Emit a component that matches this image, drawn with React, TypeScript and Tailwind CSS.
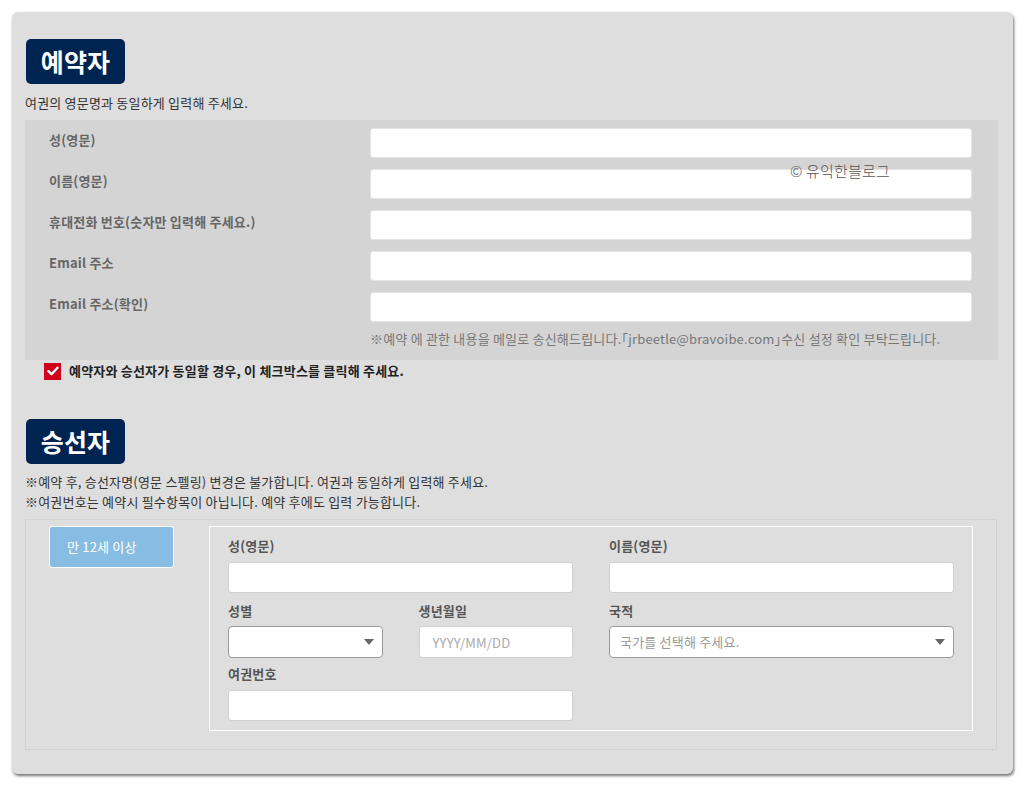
import React from 'react';

const font = "font-['Noto_Sans_CJK_KR','Noto_Sans',sans-serif]";

const inputCls = 'block w-full bg-white rounded-[3px] border border-[#d0d0d0] outline-none';

const Badge = ({ children }: { children: React.ReactNode }) => (
    <div className="ml-px flex h-[45px] w-[99px] items-center justify-center rounded-[5px] bg-[#002452] text-[25px] font-bold text-white">
        {children}
    </div>
);

const Arrow = () => (
    <svg width="10" height="6" viewBox="0 0 10 6" className="absolute right-[8px] top-1/2 -translate-y-1/2">
        <path d="M0 0h10L5 6z" fill="#666" />
    </svg>
);

const App = () => {
    const rows = ['성(영문)', '이름(영문)', '휴대전화 번호(숫자만 입력해 주세요.)', 'Email 주소', 'Email 주소(확인)'];

    return (
        <div className={`min-h-[788px] bg-white p-3 tracking-[0.2px] ${font}`}>
            <div className="relative h-[762px] w-[1001px] rounded-[6px] bg-[#dedede] px-[13px] pt-[27px] shadow-[1px_2px_3px_rgba(0,0,0,0.55)]">
                {/* 예약자 */}
                <Badge>예약자</Badge>
                <p className="mt-[10px] text-[13px] leading-[18px] text-[#333]">
                    여권의 영문명과 동일하게 입력해 주세요.
                </p>
                <div className="mt-2 w-[973px] bg-[#d4d4d4] pb-3 pl-6 pr-[26px] pt-2">
                    <div className="flex flex-col gap-[11px]">
                        {rows.map((label) => (
                            <div key={label} className="flex">
                                <label className="w-[321px] pt-[3px] text-[13px] font-bold leading-[18px] text-[#666]">
                                    {label}
                                </label>
                                <input type="text" className={`${inputCls} h-[30px] flex-1 border-[#e4e4e4]`} />
                            </div>
                        ))}
                    </div>
                    <p className="ml-[321px] mt-2 text-[13px] leading-[18px] text-[#777]">
                        ※예약 에 관한 내용을 메일로 송신해드립니다.｢jrbeetle@bravoibe.com｣수신 설정 확인 부탁드립니다.
                    </p>
                </div>
                <div className="ml-[19px] mt-[2px] flex items-center gap-2">
                    <span className="flex h-[17px] w-[17px] items-center justify-center bg-[#d0021b]">
                        <svg width="12" height="10" viewBox="0 0 12 10">
                            <path d="M1.5 5.2l3 3 6-6.4" fill="none" stroke="#fff" strokeWidth="2.4" strokeLinecap="round" strokeLinejoin="round" />
                        </svg>
                    </span>
                    <span className="text-[13px] font-bold leading-[18px] text-[#222]">
                        예약자와 승선자가 동일할 경우, 이 체크박스를 클릭해 주세요.
                    </span>
                </div>

                {/* 승선자 */}
                <div className="mt-[39px]">
                    <Badge>승선자</Badge>
                </div>
                <p className="mt-2 text-[13px] leading-[20px] text-[#333]">
                    ※예약 후, 승선자명(영문 스펠링) 변경은 불가합니다. 여권과 동일하게 입력해 주세요.
                </p>
                <p className="text-[13px] leading-[20px] text-[#333]">
                    ※여권번호는 예약시 필수항목이 아닙니다. 예약 후에도 입력 가능합니다.
                </p>
                <div className="mt-[7px] flex h-[231px] w-[972px] border border-[#d2d2d2] bg-[#dedede] pl-[23px] pr-[23px] pt-[6px]">
                    <button className="h-[42px] w-[125px] rounded-[3px] border border-white bg-[#88bde3] pl-[17px] text-left text-[13px] text-white">
                        만 12세 이상
                    </button>
                    <div className="ml-[35px] h-[205px] flex-1 border border-white px-[18px] pt-[10px]">
                        <div className="grid grid-cols-2 gap-x-9">
                            <div>
                                <label className="block text-[13px] font-bold leading-[18px] text-[#555]">성(영문)</label>
                                <input type="text" className={`${inputCls} mt-[7px] h-[31px]`} />
                            </div>
                            <div>
                                <label className="block text-[13px] font-bold leading-[18px] text-[#555]">이름(영문)</label>
                                <input type="text" className={`${inputCls} mt-[7px] h-[31px]`} />
                            </div>
                            <div className="mt-[9px] grid grid-cols-2 gap-x-9">
                                <div>
                                    <label className="block text-[13px] font-bold leading-[18px] text-[#555]">성별</label>
                                    <div className="relative mt-[6px] h-[32px] rounded-[4px] border border-[#9a9a9a] bg-white">
                                        <Arrow />
                                    </div>
                                </div>
                                <div>
                                    <label className="block text-[13px] font-bold leading-[18px] text-[#555]">생년월일</label>
                                    <input
                                        type="text"
                                        placeholder="YYYY/MM/DD"
                                        className={`${inputCls} mt-[6px] h-[32px] px-[13px] text-[13px] placeholder:text-[#aaa]`}
                                    />
                                </div>
                            </div>
                            <div className="mt-[9px]">
                                <label className="block text-[13px] font-bold leading-[18px] text-[#555]">국적</label>
                                <div className="relative mt-[6px] flex h-[32px] items-center rounded-[4px] border border-[#9a9a9a] bg-white pl-[10px] text-[13px] text-[#999]">
                                    국가를 선택해 주세요.
                                    <Arrow />
                                </div>
                            </div>
                            <div className="mt-[7px]">
                                <label className="block text-[13px] font-bold leading-[18px] text-[#555]">여권번호</label>
                                <input type="text" className={`${inputCls} mt-[7px] h-[31px]`} />
                            </div>
                        </div>
                    </div>
                </div>

                {/* watermark */}
                <span className="absolute left-[778px] top-[148px] text-[15px] font-light text-[#555]">
                    © 유익한블로그
                </span>
            </div>
        </div>
    );
};

export default App;
